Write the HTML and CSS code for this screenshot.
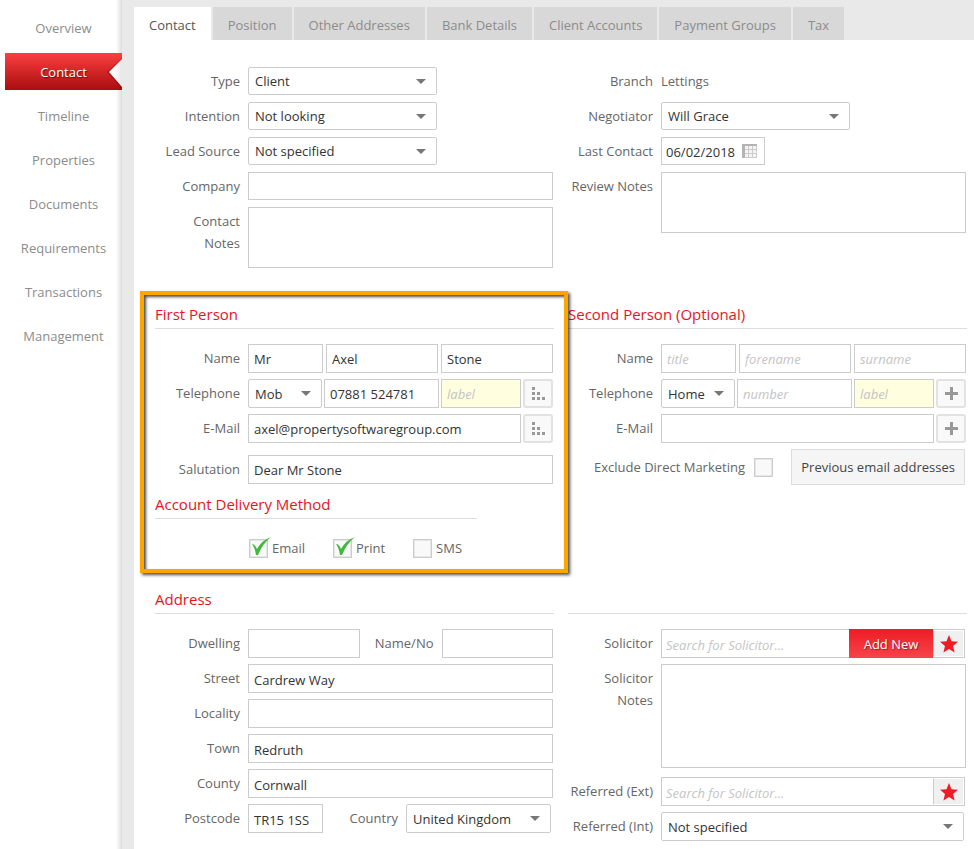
FILE: index.html
```html
<!DOCTYPE html>
<html lang="en">
<head>
    <meta charset="UTF-8">
    <meta name="viewport" content="width=device-width, initial-scale=1.0">
    <title>Contact</title>
    <link rel="stylesheet" href="styles.css">
</head>
<body>
    <nav class="sidebar">
        <a href="#overview">Overview</a>
        <a href="#contact" class="active">Contact
            <svg class="notch" viewBox="0 0 18 37" width="18" height="37" aria-hidden="true">
                <defs>
                    <linearGradient id="notchFill" x1="0" x2="1">
                        <stop offset="0.4" stop-color="#fff"/>
                        <stop offset="1" stop-color="#e6e6e6"/>
                    </linearGradient>
                </defs>
                <path d="M18 5 L3 19 L18 36 Z" fill="#600" opacity="0.35"/>
                <path d="M18 6 L5 19 L18 34 Z" fill="url(#notchFill)"/>
            </svg>
        </a>
        <a href="#timeline">Timeline</a>
        <a href="#properties">Properties</a>
        <a href="#documents">Documents</a>
        <a href="#requirements">Requirements</a>
        <a href="#transactions">Transactions</a>
        <a href="#management">Management</a>
    </nav>

    <main class="main">
        <div class="tabs">
            <button type="button" class="tab active">Contact</button>
            <button type="button" class="tab">Position</button>
            <button type="button" class="tab">Other Addresses</button>
            <button type="button" class="tab">Bank Details</button>
            <button type="button" class="tab">Client Accounts</button>
            <button type="button" class="tab">Payment Groups</button>
            <button type="button" class="tab">Tax</button>
        </div>

        <form class="content">
            <!-- General details -->
            <div class="columns general">
                <div class="rows">
                    <div class="row">
                        <label for="type">Type</label>
                        <div class="fields">
                            <span class="select medium"><select id="type"><option>Client</option></select></span>
                        </div>
                    </div>
                    <div class="row">
                        <label for="intention">Intention</label>
                        <div class="fields">
                            <span class="select medium"><select id="intention"><option>Not looking</option></select></span>
                        </div>
                    </div>
                    <div class="row">
                        <label for="leadSource">Lead Source</label>
                        <div class="fields">
                            <span class="select medium"><select id="leadSource"><option>Not specified</option></select></span>
                        </div>
                    </div>
                    <div class="row">
                        <label for="company">Company</label>
                        <div class="fields"><input type="text" id="company"></div>
                    </div>
                    <div class="row">
                        <label for="contactNotes">Contact Notes</label>
                        <div class="fields"><textarea id="contactNotes"></textarea></div>
                    </div>
                </div>

                <div class="rows">
                    <div class="row">
                        <span class="label">Branch</span>
                        <div class="fields"><span class="value">Lettings</span></div>
                    </div>
                    <div class="row">
                        <label for="negotiator">Negotiator</label>
                        <div class="fields">
                            <span class="select medium"><select id="negotiator"><option>Will Grace</option></select></span>
                        </div>
                    </div>
                    <div class="row">
                        <label for="lastContact">Last Contact</label>
                        <div class="fields">
                            <div class="date">
                                <input type="text" id="lastContact" value="06/02/2018">
                                <svg viewBox="0 0 15 14" width="15" height="14" aria-hidden="true">
                                    <path fill="#f4f4f4" d="M0 0h15v14H0z"/>
                                    <path fill="#b4b4b4" d="M0 0h15v2H0zM0 0h3v14H0z"/>
                                    <path stroke="#ccc" fill="none" d="M6.5 2v11M10.5 2v11M14.5 2v12M3 5.5h12M3 9.5h12M3 13.5h12"/>
                                </svg>
                            </div>
                        </div>
                    </div>
                    <div class="row">
                        <label for="reviewNotes">Review Notes</label>
                        <div class="fields"><textarea id="reviewNotes"></textarea></div>
                    </div>
                </div>
            </div>

            <!-- People -->
            <div class="columns people">
                <section class="highlighted">
                    <h2>First Person</h2>
                    <div class="rows">
                        <div class="row">
                            <label for="title1">Name</label>
                            <div class="fields">
                                <input type="text" id="title1" class="short" value="Mr">
                                <input type="text" aria-label="Forename" value="Axel">
                                <input type="text" aria-label="Surname" value="Stone">
                            </div>
                        </div>
                        <div class="row">
                            <label for="phoneType1">Telephone</label>
                            <div class="fields tight">
                                <span class="select short"><select id="phoneType1"><option>Mob</option></select></span>
                                <input type="text" aria-label="Number" value="07881 524781">
                                <input type="text" class="note" aria-label="Label" placeholder="label">
                                <button type="button" class="icon-btn" aria-label="More numbers">
                                    <svg viewBox="0 0 13 13" width="13" height="13" aria-hidden="true">
                                        <path fill="#999" d="M0 0h3v3H0zM0 5h3v3H0zM5 5h3v3H5zM0 10h3v3H0zM5 10h3v3H5zM10 10h3v3h-3z"/>
                                    </svg>
                                </button>
                            </div>
                        </div>
                        <div class="row">
                            <label for="email1">E-Mail</label>
                            <div class="fields tight">
                                <input type="text" id="email1" value="axel@propertysoftwaregroup.com">
                                <button type="button" class="icon-btn" aria-label="More emails">
                                    <svg viewBox="0 0 13 13" width="13" height="13" aria-hidden="true">
                                        <path fill="#999" d="M0 0h3v3H0zM0 5h3v3H0zM5 5h3v3H5zM0 10h3v3H0zM5 10h3v3H5zM10 10h3v3h-3z"/>
                                    </svg>
                                </button>
                            </div>
                        </div>
                        <div class="row salutation">
                            <label for="salutation">Salutation</label>
                            <div class="fields"><input type="text" id="salutation" value="Dear Mr Stone"></div>
                        </div>
                    </div>

                    <h2 class="delivery-title">Account Delivery Method</h2>
                    <div class="delivery">
                        <label class="check">
                            <span class="box">
                                <input type="checkbox" checked>
                                <svg viewBox="0 0 24 20" width="24" height="20" aria-hidden="true"><path fill="#41b93d" d="M3 7 Q6 7 8 12 Q13 3 22 0 Q14 6 9 18 L7 18 Q6 11 3 7 Z"/></svg>
                            </span>
                            Email
                        </label>
                        <label class="check">
                            <span class="box">
                                <input type="checkbox" checked>
                                <svg viewBox="0 0 24 20" width="24" height="20" aria-hidden="true"><path fill="#41b93d" d="M3 7 Q6 7 8 12 Q13 3 22 0 Q14 6 9 18 L7 18 Q6 11 3 7 Z"/></svg>
                            </span>
                            Print
                        </label>
                        <label class="check">
                            <span class="box"><input type="checkbox"></span>
                            SMS
                        </label>
                    </div>
                </section>

                <section>
                    <h2>Second Person (Optional)</h2>
                    <div class="rows">
                        <div class="row">
                            <label for="title2">Name</label>
                            <div class="fields">
                                <input type="text" id="title2" class="short" placeholder="title">
                                <input type="text" aria-label="Forename" placeholder="forename">
                                <input type="text" aria-label="Surname" placeholder="surname">
                            </div>
                        </div>
                        <div class="row">
                            <label for="phoneType2">Telephone</label>
                            <div class="fields tight">
                                <span class="select short"><select id="phoneType2"><option>Home</option></select></span>
                                <input type="text" aria-label="Number" placeholder="number">
                                <input type="text" class="note" aria-label="Label" placeholder="label">
                                <button type="button" class="icon-btn" aria-label="Add number">
                                    <svg viewBox="0 0 13 13" width="13" height="13" aria-hidden="true"><path fill="#999" d="M5 0h3v5h5v3H8v5H5V8H0V5h5z"/></svg>
                                </button>
                            </div>
                        </div>
                        <div class="row">
                            <label for="email2">E-Mail</label>
                            <div class="fields tight">
                                <input type="text" id="email2">
                                <button type="button" class="icon-btn" aria-label="Add email">
                                    <svg viewBox="0 0 13 13" width="13" height="13" aria-hidden="true"><path fill="#999" d="M5 0h3v5h5v3H8v5H5V8H0V5h5z"/></svg>
                                </button>
                            </div>
                        </div>
                        <div class="marketing">
                            <label for="exclude">Exclude Direct Marketing</label>
                            <span class="box"><input type="checkbox" id="exclude"></span>
                            <button type="button" class="plain-btn">Previous email addresses</button>
                        </div>
                    </div>
                </section>
            </div>

            <!-- Address and solicitor -->
            <div class="columns address">
                <section>
                    <h2>Address</h2>
                    <div class="rows">
                        <div class="row">
                            <label for="dwelling">Dwelling</label>
                            <div class="fields">
                                <input type="text" id="dwelling">
                                <label for="nameNo" class="inner">Name/No</label>
                                <input type="text" id="nameNo">
                            </div>
                        </div>
                        <div class="row">
                            <label for="street">Street</label>
                            <div class="fields"><input type="text" id="street" value="Cardrew Way"></div>
                        </div>
                        <div class="row">
                            <label for="locality">Locality</label>
                            <div class="fields"><input type="text" id="locality"></div>
                        </div>
                        <div class="row">
                            <label for="town">Town</label>
                            <div class="fields"><input type="text" id="town" value="Redruth"></div>
                        </div>
                        <div class="row">
                            <label for="county">County</label>
                            <div class="fields"><input type="text" id="county" value="Cornwall"></div>
                        </div>
                        <div class="row">
                            <label for="postcode">Postcode</label>
                            <div class="fields postcode">
                                <input type="text" id="postcode" class="short" value="TR15 1SS">
                                <label for="country" class="inner">Country</label>
                                <span class="select country"><select id="country"><option>United Kingdom</option></select></span>
                            </div>
                        </div>
                    </div>
                </section>

                <section>
                    <div class="rule"></div>
                    <div class="rows">
                        <div class="row">
                            <label for="solicitor">Solicitor</label>
                            <div class="fields">
                                <div class="search">
                                    <input type="text" id="solicitor" placeholder="Search for Solicitor...">
                                    <button type="button" class="add-btn">Add New</button>
                                    <button type="button" class="star-btn" aria-label="Favourite solicitors">
                                        <svg viewBox="0 0 18 18" width="18" height="18" aria-hidden="true"><path fill="#ee1c25" d="M9 0l2.500 6.200 6.500.500-5 4.200 1.600 6.600L9 14l-5.600 3.500L5 10.900 0 6.700l6.500-.5z"/></svg>
                                    </button>
                                </div>
                            </div>
                        </div>
                        <div class="row solicitor-notes">
                            <label for="solicitorNotes">Solicitor Notes</label>
                            <div class="fields"><textarea id="solicitorNotes"></textarea></div>
                        </div>
                        <div class="row">
                            <label for="referredExt">Referred (Ext)</label>
                            <div class="fields">
                                <div class="search">
                                    <input type="text" id="referredExt" placeholder="Search for Solicitor...">
                                    <button type="button" class="star-btn" aria-label="Favourite referrers">
                                        <svg viewBox="0 0 18 18" width="18" height="18" aria-hidden="true"><path fill="#ee1c25" d="M9 0l2.500 6.200 6.500.500-5 4.200 1.600 6.600L9 14l-5.600 3.500L5 10.900 0 6.700l6.500-.5z"/></svg>
                                    </button>
                                </div>
                            </div>
                        </div>
                        <div class="row">
                            <label for="referredInt">Referred (Int)</label>
                            <div class="fields referred-int">
                                <span class="select"><select id="referredInt"><option>Not specified</option></select></span>
                            </div>
                        </div>
                    </div>
                </section>
            </div>
        </form>
    </main>
</body>
</html>
```
FILE: styles.css
```css
* {
    margin: 0;
    padding: 0;
    box-sizing: border-box;
}

body {
    display: flex;
    min-height: 100vh;
    background-color: #fff;
    color: #666;
    font-family: 'Open Sans', 'Noto Sans', sans-serif;
    font-size: 13px;
    line-height: 22px;
}

input,
select,
textarea,
button {
    font: inherit;
    color: #333;
}

/* Sidebar */
.sidebar {
    display: flex;
    flex-direction: column;
    flex: none;
    gap: 7px;
    width: 122px;
    padding: 9px 0 0 5px;
    background: linear-gradient(to left, #ddd, #fff 6px);
}

.sidebar a {
    position: relative;
    height: 37px;
    line-height: 38px;
    color: #8c8c8c;
    text-align: center;
    text-decoration: none;
}

.sidebar a.active {
    background: linear-gradient(#fb3f3f, #a90d10);
    color: #fff;
    text-shadow: 1px 1px 1px rgba(0, 0, 0, 0.5);
}

.notch {
    position: absolute;
    top: 0;
    right: 0;
}

/* Main area */
.main {
    flex: 1;
    min-width: 0;
    display: flex;
    flex-direction: column;
    padding-left: 12px;
    background-color: #e9e9e9;
}

.tabs {
    display: flex;
    gap: 2px;
    padding-top: 7px;
}

.tab {
    height: 33px;
    padding: 2px 15px 0;
    border: none;
    background-color: #d8d8d8;
    color: #8c8c8c;
    cursor: pointer;
}

.tab.active {
    background-color: #fff;
    color: #555;
}

.content {
    flex: 1;
    padding: 27px 7px 8px 21px;
    background-color: #fff;
}

.columns {
    display: grid;
    grid-template-columns: 1fr 1fr;
    gap: 14px;
}

.people {
    margin-top: 32px;
}

.address {
    margin-top: 26px;
}

h2,
.rule {
    height: 29px;
    margin-bottom: 15px;
    border-bottom: 1px solid #ddd;
    color: #e8141e;
    font-size: 15px;
    font-weight: 400;
    line-height: 28px;
}

.rows {
    display: flex;
    flex-direction: column;
    gap: 6px;
}

.general .rows {
    gap: 7px;
}

.row {
    display: grid;
    grid-template-columns: 85px 1fr;
    gap: 8px;
    min-height: 28px;
}

.row > label,
.row > .label {
    padding-top: 3px;
    text-align: right;
}

.fields {
    display: flex;
    gap: 3px;
    min-width: 0;
    padding-right: 1px;
}

.fields.tight {
    gap: 2px;
}

.value {
    padding-top: 3px;
}

/* Controls */
input[type="text"],
textarea,
select {
    flex: 1;
    width: 100%;
    min-width: 0;
    height: 29px;
    padding: 2px 5px 0;
    border: 1px solid #ccc;
    border-radius: 0;
    background-color: #fff;
}

select {
    appearance: none;
    padding: 0 24px 0 6px;
    border-radius: 2px;
}

textarea {
    display: block;
    height: 61px;
    resize: none;
}

.general input[type="text"],
.general select {
    height: 28px;
}

.people input[type="text"] {
    padding-top: 0;
}

.solicitor-notes {
    margin-bottom: 3px;
}

.solicitor-notes textarea {
    height: 104px;
}

input::placeholder {
    color: #c4c4c4;
    font-style: italic;
}

.select {
    position: relative;
    display: flex;
    flex: 1;
}

.select::after {
    content: "";
    position: absolute;
    top: 12px;
    right: 11px;
    border: 5px solid transparent;
    border-top-color: #777;
    border-bottom: none;
    pointer-events: none;
}

.select.medium {
    flex: 0 0 189px;
}

.select.short {
    flex: 0 0 74px;
}

.select.country {
    flex: 0 0 145px;
}

input[type="text"].short {
    flex: 0 0 75px;
}

input[type="text"].note {
    flex: 0 0 80px;
    background-color: #ffffe0;
}

.inner {
    flex: 0 0 76px;
    padding: 3px 5px 0 0;
    text-align: right;
}

.postcode,
.referred-int {
    padding-right: 3px;
}

.postcode .inner {
    margin-left: auto;
}

.date {
    display: flex;
    align-items: center;
    width: 104px;
    height: 28px;
    padding-right: 7px;
    border: 1px solid #ccc;
}

.date input[type="text"] {
    height: 26px;
    padding: 2px 0 0 4px;
    border: none;
}

.icon-btn {
    display: flex;
    align-items: center;
    justify-content: center;
    flex: 0 0 30px;
    height: 29px;
    border: 2px solid #e2e2e2;
    border-radius: 3px;
    background-color: #f9f9f9;
    cursor: pointer;
}

.plain-btn {
    height: 36px;
    margin-left: auto;
    padding: 0 9px;
    border: 1px solid #ddd;
    background-color: #f5f5f5;
    color: #444;
    white-space: nowrap;
    cursor: pointer;
}

.search {
    display: flex;
    flex: 1;
    margin-right: 1px;
    border: 1px solid #ccc;
}

.search input[type="text"] {
    height: 27px;
    padding-left: 4px;
    border: none;
}

.add-btn {
    flex: 0 0 84px;
    height: 29px;
    margin: -1px 0;
    border: none;
    background: linear-gradient(#ee1c25, #f8434a);
    color: #fff;
    text-shadow: 1px 1px 1px rgba(0, 0, 0, 0.4);
    cursor: pointer;
}

.star-btn {
    display: flex;
    align-items: center;
    justify-content: center;
    flex: 0 0 31px;
    border: 1px solid #fff;
    border-left-color: #ccc;
    background-color: #f0f0f0;
    cursor: pointer;
}

/* Checkboxes */
.box {
    position: relative;
    display: flex;
    flex: none;
}

.box input {
    appearance: none;
    width: 19px;
    height: 19px;
    border: 1px solid #ccc;
    background-color: #f9f9f9;
    box-shadow: inset 0 0 0 1px #e6e6e6;
}

.box svg {
    display: none;
    position: absolute;
    top: -2px;
    left: 0;
}

.box input:checked + svg {
    display: block;
}

.salutation {
    margin-top: 6px;
}

.delivery-title {
    width: 322px;
    margin-top: 6px;
    margin-bottom: 18px;
}

.delivery {
    display: flex;
    gap: 28px;
    padding-left: 94px;
}

.check {
    display: flex;
    align-items: center;
    gap: 4px;
}

.marketing {
    display: flex;
    align-items: center;
    gap: 9px;
    padding: 0 2px 0 26px;
    white-space: nowrap;
}

/* Orange callout drawn over the first person form */
.highlighted {
    position: relative;
}

.highlighted::after {
    content: "";
    position: absolute;
    inset: -9px -14px -14px -15px;
    border: 4px solid #ffa500;
    box-shadow: 2px 2px 3px rgba(0, 0, 0, 0.7), inset 2px 2px 3px rgba(0, 0, 0, 0.7);
    pointer-events: none;
}
```
